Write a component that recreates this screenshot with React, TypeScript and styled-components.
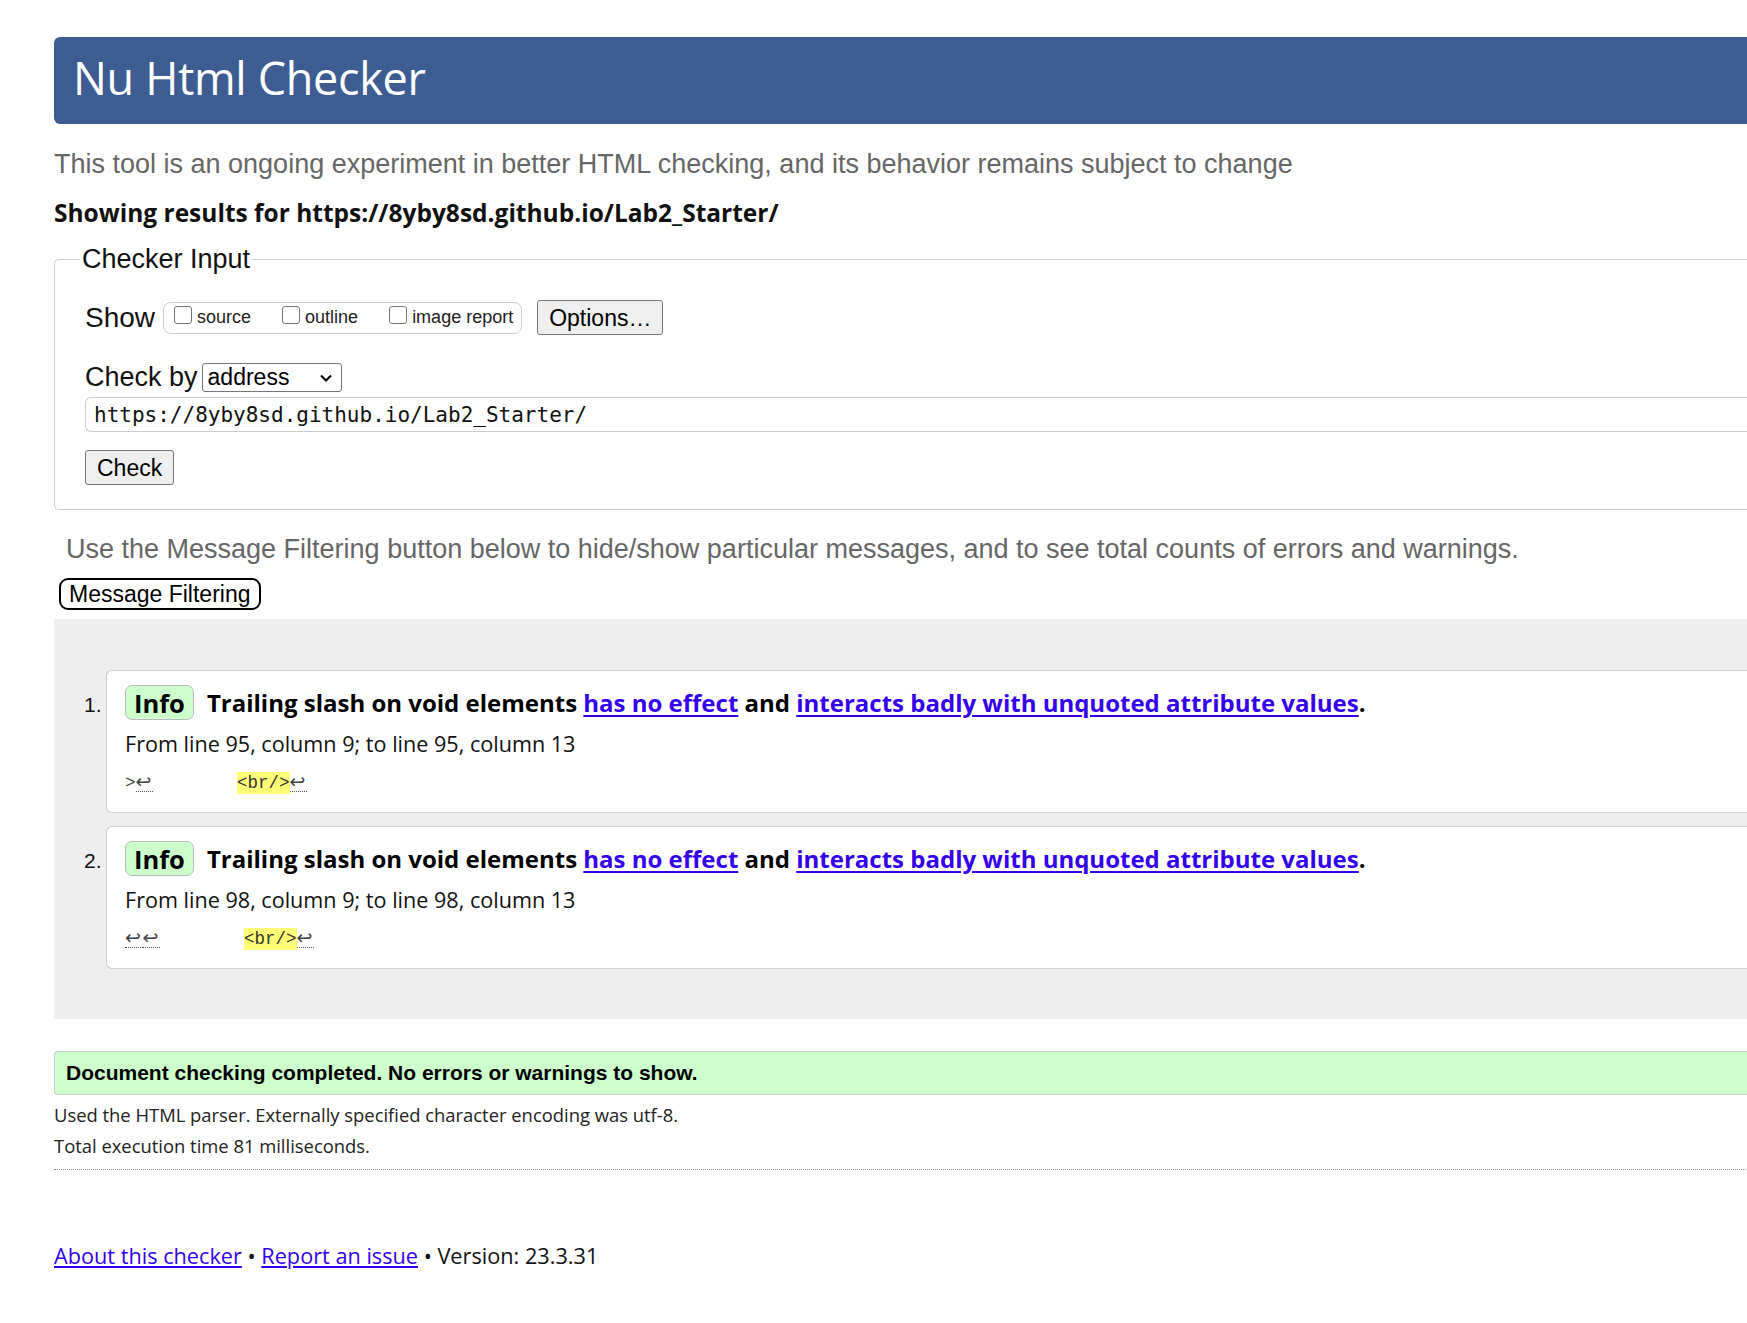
import React from "react";
import styled, { createGlobalStyle } from "styled-components";

const Global = createGlobalStyle`
  html, body { margin: 0; padding: 0; background: #fff; overflow: hidden; }
  body { font-family: "Liberation Sans", Arial, sans-serif; color: #000; }
`;

const SEGOE = `"Open Sans", "Noto Sans", sans-serif`;
const ARIAL = `"Liberation Sans", Arial, sans-serif`;

const Page = styled.div`
  width: 2200px;
  padding: 37px 0 60px 54px;
  box-sizing: border-box;
`;

const Header = styled.h1`
  margin: 0;
  height: 87px;
  box-sizing: border-box;
  display: flex;
  align-items: center;
  padding: 0 0 6px 19px;
  background: #3d5c92;
  color: #fff;
  border-radius: 6px 0 0 6px;
  font-family: ${SEGOE};
  font-weight: 400;
  font-size: 45px;
  letter-spacing: -0.3px;
`;

const Intro = styled.p`
  margin: 25px 0 0;
  font-family: ${ARIAL};
  font-size: 27px;
  line-height: 30px;
  color: #666;
`;

const Results = styled.p`
  margin: 18px 0 0;
  font-family: ${SEGOE};
  font-weight: 700;
  font-size: 24.5px;
  line-height: 32px;
  color: #111;
`;

const Fieldset = styled.fieldset`
  margin: 15px 0 0;
  padding: 10px 0 24px 30px;
  border: 1px solid #ccc;
  border-right: none;
  border-radius: 5px 0 0 5px;
  min-width: 0;
`;

const Legend = styled.legend`
  font-family: ${ARIAL};
  font-size: 27px;
  padding: 0 2px;
  margin-left: -5px;
  color: #111;
`;

const Row = styled.div<{ $mt?: number }>`
  display: flex;
  align-items: center;
  margin-top: ${(p) => p.$mt ?? 0}px;
`;

const Label = styled.span<{ $gap?: number; $size?: number }>`
  font-family: ${ARIAL};
  font-size: ${(p) => p.$size ?? 28}px;
  color: #111;
  margin-right: ${(p) => p.$gap ?? 8}px;
`;

const ChecksBox = styled.div`
  display: flex;
  align-items: center;
  height: 32px;
  box-sizing: border-box;
  padding: 0 8px 0 10px;
  border: 1px solid #ccc;
  border-radius: 8px;
`;

const CheckLabel = styled.label`
  display: flex;
  align-items: center;
  font-family: ${ARIAL};
  font-size: 18px;
  color: #222;
  margin-right: 31px;
  &:last-child { margin-right: 0; }
`;

const Box = styled.span`
  width: 18px;
  height: 18px;
  box-sizing: border-box;
  border: 1px solid #767676;
  border-radius: 3px;
  margin: 0 5px 5px 0;
  background: #fff;
`;

const Button = styled.button<{ $ml?: number }>`
  font-family: ${ARIAL};
  font-size: 23px;
  color: #000;
  background: #efefef;
  border: 1px solid #767676;
  border-radius: 3px;
  padding: 2px 11px;
  height: 35px;
  line-height: 28px;
  margin-left: ${(p) => p.$ml ?? 0}px;
`;

const Select = styled.div`
  display: flex;
  align-items: center;
  justify-content: space-between;
  width: 140px;
  height: 29px;
  box-sizing: border-box;
  border: 1px solid #767676;
  border-radius: 3px;
  padding: 0 8px 0 5px;
  font-family: ${ARIAL};
  font-size: 23px;
  color: #000;
  background: #fff;
`;

const UrlInput = styled.div`
  margin-top: 4px;
  height: 35px;
  box-sizing: border-box;
  border: 1px solid #ccc;
  border-right: none;
  border-radius: 6px 0 0 6px;
  padding: 0 8px;
  display: flex;
  align-items: center;
  font-family: "DejaVu Sans Mono", "Liberation Mono", monospace;
  font-size: 21px;
  color: #111;
`;

const Hint = styled.p`
  margin: 24px 0 0 12px;
  font-family: ${ARIAL};
  font-size: 27px;
  line-height: 30px;
  color: #666;
`;

const FilterButton = styled.button`
  margin: 14px 0 0 5px;
  height: 32px;
  padding: 0 8px;
  font-family: ${ARIAL};
  font-size: 23px;
  color: #000;
  background: #fff;
  border: 2px solid #000;
  border-radius: 9px;
  line-height: 26px;
`;

const Messages = styled.ol`
  list-style: none;
  margin: 9px 0 0;
  padding: 51px 0 50px 30px;
  background: #eee;
  display: flex;
  flex-direction: column;
  gap: 13px;
`;

const Item = styled.li`
  display: flex;
  align-items: flex-start;
`;

const Num = styled.span`
  width: 22px;
  padding-top: 23px;
  font-family: ${ARIAL};
  font-size: 21px;
  color: #111;
`;

const Card = styled.div`
  flex: 1;
  background: #fff;
  border: 1px solid #ccc;
  border-right: none;
  border-radius: 6px 0 0 6px;
  padding: 14px 0 17px 18px;
`;

const TitleLine = styled.p`
  margin: 0;
  display: flex;
  align-items: center;
  font-family: ${SEGOE};
  font-weight: 700;
  font-size: 24px;
  color: #000;
  white-space: pre;
`;

const Badge = styled.span`
  display: inline-flex;
  align-items: center;
  height: 35px;
  box-sizing: border-box;
  padding: 0 8px;
  margin-right: 13px;
  background: #ccffcc;
  border: 1px solid #bbb;
  border-radius: 7px;
  font-size: 25.5px;
`;

const Link = styled.a`
  color: #3300ee;
  text-decoration: underline;
  text-underline-offset: 3px;
`;

const Location = styled.p`
  margin: 9px 0 0;
  font-family: ${SEGOE};
  font-size: 21.6px;
  color: #111;
`;

const Extract = styled.p`
  margin: 13px 0 0;
  font-family: "Liberation Mono", monospace;
  font-size: 17.5px;
  line-height: 24px;
  color: #444;
  white-space: pre;
`;

const Lf = styled.span`
  display: inline-block;
  font-family: "DejaVu Sans", sans-serif;
  font-size: 19px;
  line-height: 20px;
  width: 17.5px;
  border-bottom: 1px dotted #555;
  color: #444;
`;

const Mark = styled.mark`
  background: #ffff77;
  color: #333;
  padding: 1px 0;
`;

const Success = styled.p`
  margin: 32px 0 0;
  height: 44px;
  box-sizing: border-box;
  display: flex;
  align-items: center;
  padding-left: 11px;
  background: #ccffcc;
  border: 1px solid #ccc;
  border-right: none;
  border-radius: 4px 0 0 4px;
  font-family: ${ARIAL};
  font-weight: 700;
  font-size: 21px;
  color: #000;
`;

const Details = styled.p`
  margin: 4px 0 0;
  font-family: ${SEGOE};
  font-size: 18.4px;
  line-height: 31px;
  color: #222;
`;

const Rule = styled.hr`
  margin: 8px 0 0;
  border: none;
  border-top: 1px dotted #888;
`;

const Footer = styled.p`
  margin: 71px 0 0;
  font-family: ${SEGOE};
  font-size: 21.7px;
  color: #111;
`;

const FootLink = styled.a`
  color: #3300ee;
  text-decoration: underline;
`;

type Msg = { n: number; from: string; pre: React.ReactNode };

const msgs: Msg[] = [
  {
    n: 1,
    from: "From line 95, column 9; to line 95, column 13",
    pre: (
      <>
        {">"}
        <Lf>↩</Lf>
        {"        "}
        <Mark>{"<br/>"}</Mark>
        <Lf>↩</Lf>
      </>
    ),
  },
  {
    n: 2,
    from: "From line 98, column 9; to line 98, column 13",
    pre: (
      <>
        <Lf>↩</Lf>
        <Lf>↩</Lf>
        {"        "}
        <Mark>{"<br/>"}</Mark>
        <Lf>↩</Lf>
      </>
    ),
  },
];

export default function App() {
  return (
    <>
      <Global />
      <Page>
        <Header>Nu Html Checker</Header>
        <Intro>
          This tool is an ongoing experiment in better HTML checking, and its behavior remains subject to change
        </Intro>
        <Results>Showing results for https://8yby8sd.github.io/Lab2_Starter/</Results>
        <Fieldset>
          <Legend>Checker Input</Legend>
          <Row $mt={15}>
            <Label>Show</Label>
            <ChecksBox>
              <CheckLabel>
                <Box />
                source
              </CheckLabel>
              <CheckLabel>
                <Box />
                outline
              </CheckLabel>
              <CheckLabel>
                <Box />
                image report
              </CheckLabel>
            </ChecksBox>
            <Button $ml={15}>Options…</Button>
          </Row>
          <Row $mt={27}>
            <Label $gap={4} $size={27}>Check by</Label>
            <Select>
              address
              <svg width="14" height="10" viewBox="0 0 14 10">
                <path d="M2 2.5 L7 7.5 L12 2.5" fill="none" stroke="#000" strokeWidth="2" />
              </svg>
            </Select>
          </Row>
          <UrlInput>https://8yby8sd.github.io/Lab2_Starter/</UrlInput>
          <Row $mt={18}>
            <Button>Check</Button>
          </Row>
        </Fieldset>
        <Hint>
          Use the Message Filtering button below to hide/show particular messages, and to see total counts of errors and warnings.
        </Hint>
        <FilterButton>Message Filtering</FilterButton>
        <Messages>
          {msgs.map((m) => (
            <Item key={m.n}>
              <Num>{m.n}.</Num>
              <Card>
                <TitleLine>
                  <Badge>Info</Badge>
                  Trailing slash on void elements <Link href="#">has no effect</Link> and{" "}
                  <Link href="#">interacts badly with unquoted attribute values</Link>.
                </TitleLine>
                <Location>{m.from}</Location>
                <Extract>{m.pre}</Extract>
              </Card>
            </Item>
          ))}
        </Messages>
        <Success>Document checking completed. No errors or warnings to show.</Success>
        <Details>
          Used the HTML parser. Externally specified character encoding was utf-8.
          <br />
          Total execution time 81 milliseconds.
        </Details>
        <Rule />
        <Footer>
          <FootLink href="#">About this checker</FootLink> • <FootLink href="#">Report an issue</FootLink> • Version: 23.3.31
        </Footer>
      </Page>
    </>
  );
}
